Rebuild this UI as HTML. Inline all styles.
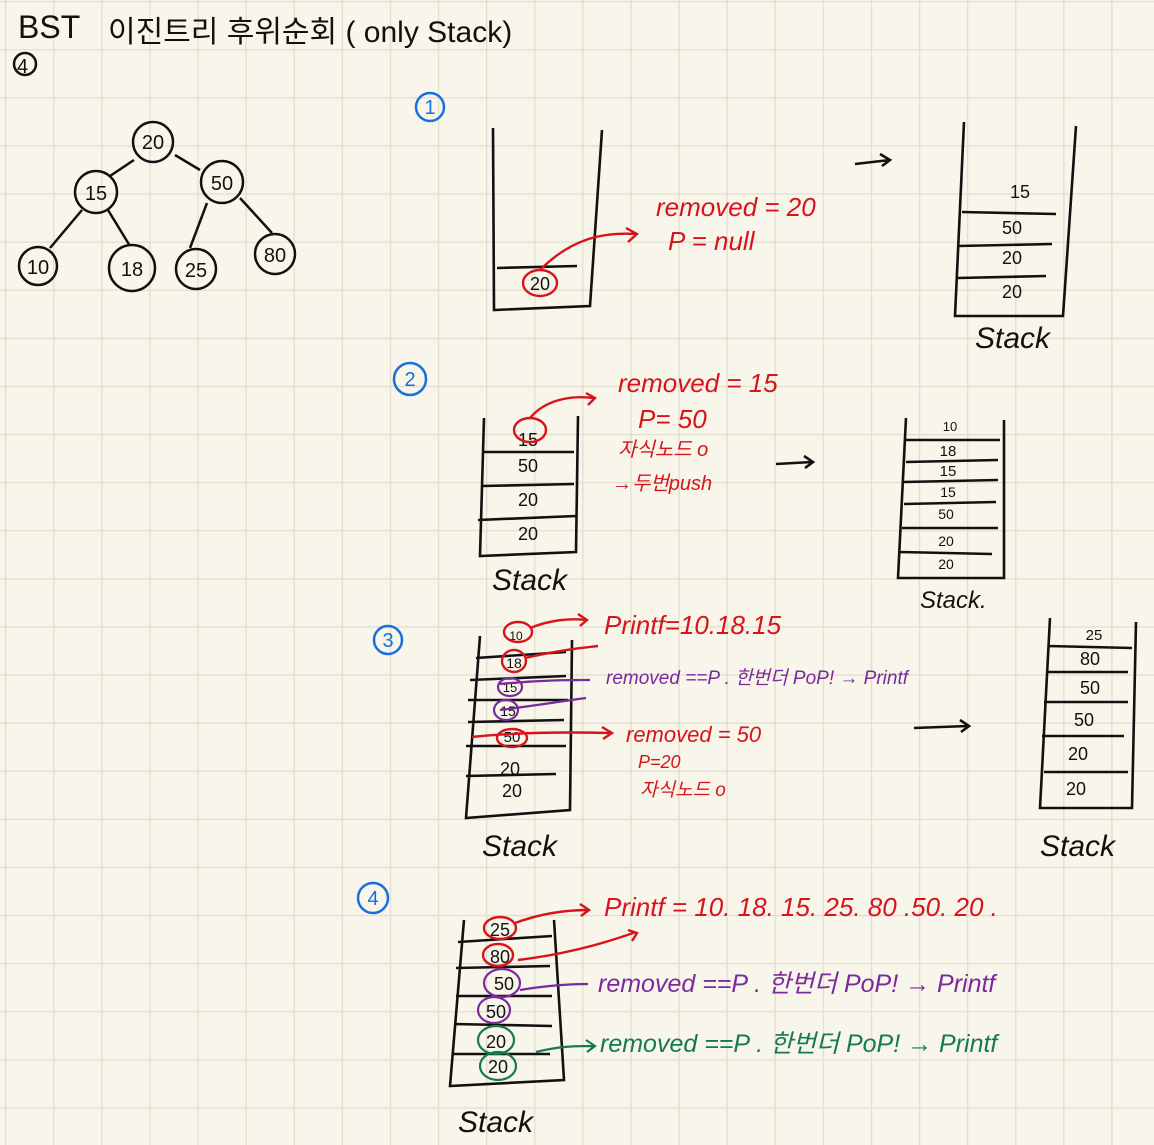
<!DOCTYPE html>
<html><head><meta charset="utf-8"><style>
html,body{margin:0;padding:0;width:1154px;height:1145px;overflow:hidden;background:#f8f5ea}
svg{display:block}
text{font-family:"Liberation Sans","Noto Sans CJK KR",sans-serif}
</style></head><body>
<svg width="1154" height="1145" viewBox="0 0 1154 1145" xmlns="http://www.w3.org/2000/svg">
<defs>
<pattern id="g" x="5" y="1" width="48.1" height="48.1" patternUnits="userSpaceOnUse">
<path d="M0 0V48.1M0 0H48.1" stroke="#e2ddcf" stroke-width="2.6" fill="none"/>
</pattern>
</defs>
<rect width="1154" height="1145" fill="#f8f5ea"/>
<rect width="1154" height="1145" fill="url(#g)"/>

<g fill="#111" font-size="30">
<text x="18" y="38" font-size="32">BST</text>
<text x="108" y="42" font-size="30">이진트리 후위순회 ( only Stack)</text>
</g>
<circle cx="25" cy="64" r="11" fill="none" stroke="#111" stroke-width="2.5"/>
<text x="17" y="73" font-size="20" fill="#111">4</text>

<g stroke="#111" stroke-width="2.5" fill="none">
<circle cx="153" cy="142" r="20"/><circle cx="96" cy="192" r="21"/><circle cx="222" cy="182" r="21"/>
<circle cx="38" cy="266" r="19"/><circle cx="132" cy="268" r="23"/><circle cx="196" cy="269" r="20"/><circle cx="275" cy="254" r="20"/>
<path d="M134 160L110 176M175 155L200 170M82 210L50 248M108 210L130 246M207 203L190 248M240 198L272 233"/>
</g>
<g font-size="20" fill="#111" text-anchor="middle">
<text x="153" y="149">20</text><text x="96" y="200">15</text><text x="222" y="190">50</text>
<text x="38" y="274">10</text><text x="132" y="276">18</text><text x="196" y="277">25</text><text x="275" y="262">80</text>
</g>

<g stroke="#1a6fe0" stroke-width="2.5" fill="none">
<circle cx="430" cy="107" r="14"/><circle cx="410" cy="379" r="16"/><circle cx="388" cy="640" r="14"/><circle cx="373" cy="898" r="15"/>
</g>
<g fill="#1a6fe0" font-size="20" text-anchor="middle">
<text x="430" y="114">1</text><text x="410" y="386">2</text><text x="388" y="647">3</text><text x="373" y="905">4</text>
</g>

<g stroke="#111" stroke-width="2.6" fill="none">
<path d="M493 128L494 310L590 306L602 130M497 268L577 266"/>
<path d="M855 164L890 160M880 154L890 160L882 166"/>
<path d="M964 122L955 316L1063 316L1076 126M962 212L1056 214M958 246L1052 244M958 278L1046 276"/>
<path d="M484 418L480 556L576 552L578 416M484 452L574 452M482 486L574 484M478 520L576 516"/>
<path d="M776 464L812 462M804 456L813 462L805 468"/>
<path d="M906 418L898 578L1004 578L1004 420M906 440L1000 440M906 462L998 460M904 482L998 480M904 504L996 502M902 528L998 528M900 552L992 554"/>
<path d="M480 636L466 818L570 810L572 640M476 658L566 652M470 680L566 676M468 700L568 700M468 722L564 720M466 746L566 746M466 776L556 774"/>
<path d="M914 728L968 726M960 720L969 726L961 732"/>
<path d="M1050 618L1040 808L1132 808L1136 622M1048 646L1132 648M1046 672L1128 672M1044 702L1128 702M1042 736L1124 736M1044 772L1128 772"/>
<path d="M464 920L450 1086L564 1080L554 920M458 942L552 936M456 968L550 966M456 996L552 996M454 1024L552 1026M452 1054L550 1054"/>
</g>
<g fill="#111" font-size="18" text-anchor="middle">
<text x="540" y="290">20</text>
<text x="1020" y="198">15</text><text x="1012" y="234">50</text><text x="1012" y="264">20</text><text x="1012" y="298">20</text>
<text x="528" y="472">50</text><text x="528" y="506">20</text><text x="528" y="540">20</text>
<text x="950" y="431" font-size="13">10</text><text x="948" y="456" font-size="15">18</text><text x="948" y="476" font-size="15">15</text><text x="948" y="497" font-size="14">15</text><text x="946" y="519" font-size="14">50</text><text x="946" y="546" font-size="14">20</text><text x="946" y="569" font-size="14">20</text>
<text x="510" y="775">20</text><text x="512" y="797">20</text>
<text x="1094" y="640" font-size="15">25</text><text x="1090" y="665">80</text><text x="1090" y="694">50</text><text x="1084" y="726">50</text><text x="1078" y="760">20</text><text x="1076" y="795">20</text>
<text x="500" y="936">25</text><text x="500" y="963">80</text><text x="504" y="990">50</text><text x="496" y="1018">50</text><text x="496" y="1048">20</text><text x="498" y="1073">20</text>
<text x="514" y="668" font-size="14">18</text><text x="516" y="640" font-size="12">10</text><text x="510" y="692" font-size="13">15</text><text x="508" y="716" font-size="14">15</text><text x="512" y="742" font-size="15">50</text>
<text x="528" y="446">15</text>
</g>
<g fill="#111" font-size="30" font-style="italic">
<text x="975" y="348">Stack</text><text x="492" y="590">Stack</text><text x="920" y="608" font-size="24">Stack.</text>
<text x="482" y="856">Stack</text><text x="1040" y="856">Stack</text><text x="458" y="1132">Stack</text>
</g>

<g stroke="#d8141b" stroke-width="2.4" fill="none">
<ellipse cx="540" cy="283" rx="17" ry="13"/>
<path d="M540 270C570 240 600 232 636 234M626 228L637 234L628 242"/>
<ellipse cx="530" cy="430" rx="16" ry="12"/>
<path d="M530 418C545 400 570 395 594 398M586 393L595 398L588 405"/>
<ellipse cx="518" cy="632" rx="14" ry="10"/><ellipse cx="514" cy="661" rx="12" ry="11"/><ellipse cx="512" cy="738" rx="15" ry="9"/>
<path d="M530 628C550 620 570 618 586 620M578 614L587 620L580 626M525 658C560 650 580 648 598 646M472 737C520 732 570 732 610 733M602 727L612 733L603 739"/>
<ellipse cx="500" cy="928" rx="16" ry="11"/><ellipse cx="498" cy="955" rx="15" ry="11"/>
<path d="M515 923C545 912 570 910 588 910M580 904L589 910L581 916M518 960C560 955 600 945 636 932M628 930L637 933L632 941"/>
</g>
<g fill="#d8141b" font-size="26" font-style="italic">
<text x="656" y="216">removed = 20</text><text x="668" y="250">P = null</text>
<text x="618" y="392">removed = 15</text><text x="638" y="428">P= 50</text>
<text x="618" y="456" font-size="20">자식노드 o</text><text x="612" y="490" font-size="20">→두번push</text>
<text x="604" y="634">Printf=10.18.15</text>
<text x="626" y="742" font-size="22">removed = 50</text><text x="638" y="768" font-size="18">P=20</text><text x="640" y="796" font-size="19">자식노드 o</text>
<text x="604" y="916">Printf = 10. 18. 15. 25. 80 .50. 20 .</text>
</g>
<g stroke="#7a2a9c" stroke-width="2.2" fill="none">
<ellipse cx="510" cy="687" rx="12" ry="9"/><ellipse cx="506" cy="710" rx="12" ry="10"/>
<path d="M500 684C540 680 570 680 590 680M500 710C540 705 570 700 586 698"/>
<ellipse cx="502" cy="983" rx="18" ry="14"/><ellipse cx="494" cy="1010" rx="16" ry="13"/>
<path d="M520 990C550 985 570 984 588 984"/>
</g>
<g fill="#7a2a9c" font-size="19" font-style="italic">
<text x="606" y="684">removed ==P . 한번더 PoP! → Printf</text>
<text x="598" y="992" font-size="25">removed ==P . 한번더 PoP! → Printf</text>
</g>
<g stroke="#157a4e" stroke-width="2.2" fill="none">
<ellipse cx="496" cy="1040" rx="18" ry="14"/><ellipse cx="498" cy="1066" rx="18" ry="14"/>
<path d="M536 1052C560 1046 576 1046 594 1046M586 1040L595 1046L587 1052"/>
</g>
<g fill="#157a4e" font-size="25" font-style="italic">
<text x="600" y="1052">removed ==P . 한번더 PoP! → Printf</text>
</g>
</svg>
</body></html>
